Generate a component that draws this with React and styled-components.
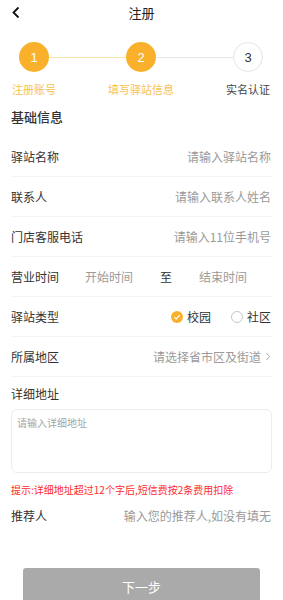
import React from 'react'
import styled, { createGlobalStyle } from 'styled-components'

const GlobalStyle = createGlobalStyle`
  html, body { margin: 0; padding: 0; background: #fff; }
  body { font-family: "Noto Sans CJK SC", "Noto Sans", sans-serif; color: #333; }
  * { box-sizing: border-box; }
`

const Page = styled.div`
  width: 283px;
  height: 600px;
  overflow: hidden;
  background: #fff;
`

const Header = styled.div`
  height: 25px;
  display: flex;
  align-items: center;
  justify-content: center;
  position: relative;
  font-size: 13px;
  color: #222;
`

const Back = styled.svg`
  position: absolute;
  left: 11px;
  top: 6px;
`

const Steps = styled.div`
  display: flex;
  align-items: flex-start;
  padding: 17px 20px 0 19px;
`

const Step = styled.div`
  width: 30px;
  display: flex;
  flex-direction: column;
  align-items: center;
`

const Circle = styled.div`
  width: 30px;
  height: 30px;
  border-radius: 50%;
  display: flex;
  align-items: center;
  justify-content: center;
  font-family: "Liberation Sans", Arial, sans-serif;
  font-size: 13px;
  background: ${p => (p.$done ? '#f9b12b' : '#fff')};
  color: ${p => (p.$done ? '#fff' : '#333')};
  border: ${p => (p.$done ? 'none' : '1px solid #e4e4e4')};
`

const StepLabel = styled.div`
  margin-top: 9px;
  height: 16px;
  line-height: 16px;
  font-size: 11px;
  white-space: nowrap;
  color: ${p => (p.$done ? '#f7c152' : '#444')};
`

const Line = styled.div`
  flex: 1;
  height: 1px;
  margin-top: 14.5px;
  background: ${p => (p.$done ? '#fbe4b0' : '#e6e6e6')};
`

const SectionTitle = styled.div`
  height: 40px;
  line-height: 40px;
  padding-left: 11px;
  font-size: 13px;
  font-weight: 500;
  color: #333;
`

const Row = styled.div`
  height: ${p => p.$h || 40}px;
  margin: 0 12px 0 11px;
  display: flex;
  align-items: center;
  justify-content: space-between;
  border-bottom: ${p => (p.$noline ? 'none' : '1px solid #f3f3f3')};
  font-size: 12px;
`

const Label = styled.span`
  color: #333;
  white-space: nowrap;
`

const Placeholder = styled.span`
  color: #9a9a9a;
  white-space: nowrap;
  display: flex;
  align-items: center;
  gap: 4px;
`

const TimeGroup = styled.div`
  flex: 1;
  display: flex;
  align-items: center;
  gap: 27px;
  margin-left: 26px;
`

const Sep = styled.span`
  color: #333;
`

const Radios = styled.div`
  display: flex;
  align-items: center;
  gap: 20px;
`

const Radio = styled.label`
  display: flex;
  align-items: center;
  gap: 4px;
  color: #333;
`

const Dot = styled.span`
  width: 12px;
  height: 12px;
  border-radius: 50%;
  display: flex;
  align-items: center;
  justify-content: center;
  background: ${p => (p.$on ? '#f9b12b' : '#fff')};
  border: ${p => (p.$on ? 'none' : '1px solid #c8c8c8')};
`

const AddrLabel = styled.div`
  height: 32px;
  line-height: 34px;
  padding-left: 11px;
  font-size: 12px;
  color: #333;
`

const TextBox = styled.div`
  margin: 0 11px;
  height: 64px;
  border: 1px solid #ececec;
  border-radius: 6px;
  padding: 5px 5px;
  font-size: 10px;
  color: #a5a5a5;
`

const Tip = styled.div`
  margin-top: 10px;
  padding-left: 11px;
  font-size: 10px;
  line-height: 14px;
  color: #ff2b2b;
`

const Footer = styled.div`
  padding: 34px 23px 0 23px;
`

const Button = styled.button`
  width: 237px;
  height: 36px;
  border: none;
  border-radius: 3px;
  background: #aaaaaa;
  color: #fff;
  font-family: inherit;
  font-size: 13px;
  padding: 0;
`

const steps = [
  { n: 1, label: '注册账号', done: true },
  { n: 2, label: '填写驿站信息', done: true },
  { n: 3, label: '实名认证', done: false },
]

export default function App() {
  return (
    <Page>
      <GlobalStyle />
      <Header>
        <Back width="10" height="13" viewBox="0 0 10 13">
          <path d="M7.5 1.5 L2.5 6.5 L7.5 11.5" fill="none" stroke="#111" strokeWidth="1.8" />
        </Back>
        注册
      </Header>

      <Steps>
        {steps.map((s, i) => (
          <React.Fragment key={s.n}>
            <Step>
              <Circle $done={s.done}>{s.n}</Circle>
              <StepLabel $done={s.done}>{s.label}</StepLabel>
            </Step>
            {i < steps.length - 1 && <Line $done={steps[i + 1].done} />}
          </React.Fragment>
        ))}
      </Steps>

      <SectionTitle>基础信息</SectionTitle>

      <Row>
        <Label>驿站名称</Label>
        <Placeholder>请输入驿站名称</Placeholder>
      </Row>
      <Row>
        <Label>联系人</Label>
        <Placeholder>请输入联系人姓名</Placeholder>
      </Row>
      <Row>
        <Label>门店客服电话</Label>
        <Placeholder>请输入11位手机号</Placeholder>
      </Row>
      <Row>
        <Label>营业时间</Label>
        <TimeGroup>
          <Placeholder>开始时间</Placeholder>
          <Sep>至</Sep>
          <Placeholder>结束时间</Placeholder>
        </TimeGroup>
      </Row>
      <Row>
        <Label>驿站类型</Label>
        <Radios>
          <Radio>
            <Dot $on>
              <svg width="8" height="8" viewBox="0 0 8 8">
                <path d="M1.3 4.1 L3.3 6 L6.7 2.2" fill="none" stroke="#fff" strokeWidth="1.2" />
              </svg>
            </Dot>
            校园
          </Radio>
          <Radio>
            <Dot />
            社区
          </Radio>
        </Radios>
      </Row>
      <Row>
        <Label>所属地区</Label>
        <Placeholder>
          请选择省市区及街道
          <svg width="6" height="9" viewBox="0 0 6 9">
            <path d="M1.5 1 L4.5 4.5 L1.5 8" fill="none" stroke="#aaa" strokeWidth="1" />
          </svg>
        </Placeholder>
      </Row>

      <AddrLabel>详细地址</AddrLabel>
      <TextBox>请输入详细地址</TextBox>
      <Tip>提示:详细地址超过12个字后,短信费按2条费用扣除</Tip>

      <Row $noline $h={37}>
        <Label>推荐人</Label>
        <Placeholder>输入您的推荐人,如没有填无</Placeholder>
      </Row>

      <Footer>
        <Button>下一步</Button>
      </Footer>
    </Page>
  )
}
